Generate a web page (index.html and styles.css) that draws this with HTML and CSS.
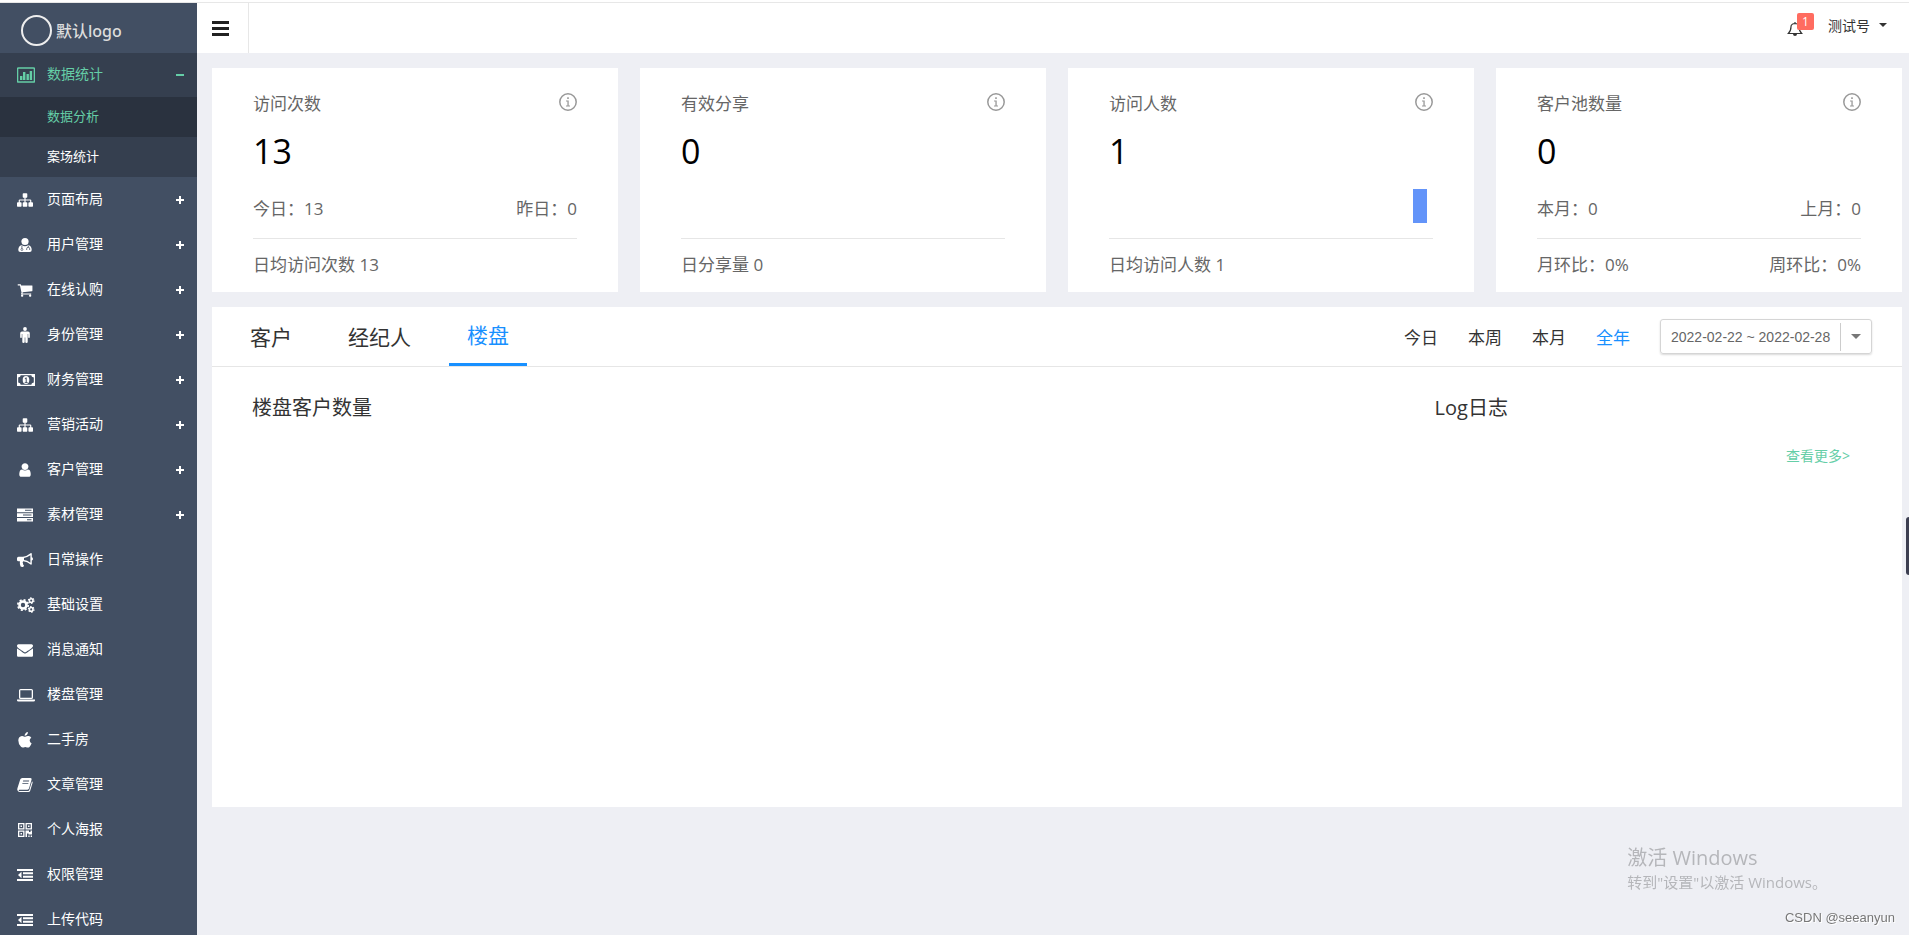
FILE: index.html
```html
<!DOCTYPE html>
<html lang="zh-CN">
<head>
  <meta charset="UTF-8">
  <meta name="viewport" content="width=device-width, initial-scale=1.0">
  <title>数据分析</title>
  <link rel="stylesheet" href="styles.css">
</head>
<body>

  <!-- 图标 -->
  <svg class="sprite" aria-hidden="true">
    <symbol id="i-chart" viewBox="0 0 18 16"><path d="M1.5 1h15q1 0 1 1v12q0 1-1 1h-15q-1 0-1-1V2q0-1 1-1z" fill="none" stroke="currentColor" stroke-width="1.600"/><path d="M3 9h2.400v4H3zM6 5h2.400v8H6zM9.500 7h2.400v6H9.500zM12.700 4h2.400v9h-2.400z"/></symbol>
    <symbol id="i-sitemap" viewBox="0 0 1792 1792"><path d="M1792 1248v320q0 40-28 68t-68 28h-320q-40 0-68-28t-28-68v-320q0-40 28-68t68-28h96v-192h-512v192h96q40 0 68 28t28 68v320q0 40-28 68t-68 28h-320q-40 0-68-28t-28-68v-320q0-40 28-68t68-28h96v-192h-512v192h96q40 0 68 28t28 68v320q0 40-28 68t-68 28h-320q-40 0-68-28t-28-68v-320q0-40 28-68t68-28h96v-192q0-52 38-90t90-38h512v-192h-96q-40 0-68-28t-28-68v-320q0-40 28-68t68-28h320q40 0 68 28t28 68v320q0 40-28 68t-68 28h-96v192h512q52 0 90 38t38 90v192h96q40 0 68 28t28 68z"/></symbol>
    <symbol id="i-user" viewBox="0 0 1792 1792"><path d="M1536 1399q0 109-62.5 187t-150.5 78h-854q-88 0-150.5-78t-62.5-187q0-85 8.500-160.5t31.500-152 58.500-131 94-89 134.500-34.500q131 128 313 128t313-128q76 0 134.500 34.500t94 89 58.500 131 31.500 152 8.500 160.500zm-256-887q0 159-112.500 271.500t-271.500 112.500-271.500-112.500-112.500-271.500 112.500-271.500 271.500-112.500 271.500 112.500 112.500 271.500z"/></symbol>
    <symbol id="i-doctor" viewBox="0 0 16 16"><circle cx="8" cy="4.500" r="3.600"/><path d="M4.600 8Q8 10.500 11.400 8 14.700 9 14.700 13q0 2-2 2H3.300q-2 0-2-2 0-4 3.300-5z"/><path d="M4.900 8.500v3.200M11.300 8.500v1.700M9.700 13v-1.200q0-1.500 1.500-1.500t1.500 1.500V13" fill="none" stroke="#424f63" stroke-width=".8"/><circle cx="4.900" cy="12.500" r="1" fill="none" stroke="#424f63" stroke-width=".7"/></symbol>
    <symbol id="i-cart" viewBox="0 0 1792 1792"><path d="M704 1536q0 52-38 90t-90 38-90-38-38-90 38-90 90-38 90 38 38 90zm896 0q0 52-38 90t-90 38-90-38-38-90 38-90 90-38 90 38 38 90zm128-1088v512q0 24-16.500 42.500t-40.500 21.500l-1044 122q13 60 13 70 0 16-24 64h920q26 0 45 19t19 45-19 45-45 19h-1024q-26 0-45-19t-19-45q0-11 8-31.500t16-36 21.500-40 15.500-29.500l-177-823h-204q-26 0-45-19t-19-45 19-45 45-19h256q16 0 28.500 6.500t19.500 15.500 13 24.500 8 26 5.500 29.500 4.500 26h1201q26 0 45 19t19 45z"/></symbol>
    <symbol id="i-male" viewBox="0 0 16 16"><circle cx="8" cy="2" r="1.900"/><path d="M5 4.500h6q1.800 0 1.800 1.800v3.900q0 .8-.8.800t-.8-.8V7h-.5v8q0 1-1.200 1t-1.200-1v-4.500h-.6V15q0 1-1.200 1t-1.200-1V7h-.5v3.200q0 .8-.8.800t-.8-.8V6.300Q3.200 4.500 5 4.500z"/></symbol>
    <symbol id="i-money" viewBox="0 0 18 16"><path fill-rule="evenodd" d="M0 2h18v12H0zM3.700 3.200q0 2-2.500 2.200v5.200q2.500.2 2.500 2.200h10.600q0-2 2.500-2.200V5.400q-2.500-.2-2.500-2.200z"/><ellipse cx="9" cy="8" rx="3.300" ry="4.100"/><path d="M7.700 6.600l1.100-1h.9v4.600h1v.9H7.700v-.9h1V6.800l-.6.400z" fill="#424f63"/></symbol>
    <symbol id="i-server" viewBox="0 0 16 16"><path fill-rule="evenodd" d="M0 1.500h16v3.700H0zM8 2.800v1h6.500v-1zM0 6.200h16v3.700H0zM6 7.500v1h8.500v-1zM0 10.900h16v3.600H0zM10 12.200v1h4.500v-1z"/></symbol>
    <symbol id="i-horn" viewBox="0 0 16 16"><path fill-rule="evenodd" d="M14 1q.8 0 .8.800v3.500q1.200.4 1.200 1.600t-1.200 1.600v3.400q0 .8-.8.800-4-3.200-7.700-3.400-1.200.8-.3 2-.4.900.8 1.900.5.900-.5 1.600-1.600.5-2.700-.3-1.100-2.300-.7-5.200H1.500Q0 9.300 0 8V6.200q0-1.500 1.500-1.500H6Q9.600 4.500 14 1zM13.400 3.200Q10.200 5.600 7 5.900v2.200q3.300.3 6.400 2.700z"/></symbol>
    <symbol id="i-cogs" viewBox="0 0 18 16"><g fill="none" stroke="currentColor"><circle cx="6" cy="8" r="3.500" stroke-width="2.600"/><circle cx="6" cy="8" r="5.200" stroke-width="1.700" stroke-dasharray="2.040 2.040"/><circle cx="14.200" cy="3.600" r="1.800" stroke-width="1.500"/><circle cx="14.200" cy="3.600" r="2.800" stroke-width="1.200" stroke-dasharray="1.470 1.460"/><circle cx="14.200" cy="12.400" r="1.800" stroke-width="1.500"/><circle cx="14.200" cy="12.400" r="2.800" stroke-width="1.200" stroke-dasharray="1.470 1.460"/></g></symbol>
    <symbol id="i-mail" viewBox="0 0 1792 1792"><path d="M1792 710v794q0 66-47 113t-113 47h-1472q-66 0-113-47t-47-113v-794q44 49 101 87 362 246 497 345 57 42 92.500 65.500t94.500 48 110 24.500h2q51 0 110-24.500t94.500-48 92.500-65.500q170-123 498-345 57-39 100-87zm0-294q0 79-49 151t-122 123q-376 261-468 325-10 7-42.500 31t-54 38.500-52 32.500-57.500 27-50 9h-2q-23 0-50-9t-57.500-27-52-32.500-54-38.500-42.500-31q-91-64-262-182.500t-205-142.500q-62-42-117-115.500t-55-136.500q0-78 41.500-130t118.500-52h1472q65 0 112.500 47t47.500 113z"/></symbol>
    <symbol id="i-laptop" viewBox="0 0 18 16"><path fill-rule="evenodd" d="M3.700 2h10.600Q16 2 16 3.600v6.800q0 1.600-1.700 1.600H3.700Q2 12 2 10.400V3.600Q2 2 3.700 2zM3.300 3.300v7.400h11.400V3.300zM0 12.600h18v.9q0 .9-1.500.9h-15Q0 14.400 0 13.500z"/></symbol>
    <symbol id="i-apple" viewBox="0 0 16 16"><path d="M14.600 11.200q-.7 2.200-2.100 3.700-1.100 1.100-2.500.5-1.700-.8-3.400 0-1.500.6-2.600-.6Q1.200 11.700 1.300 8.200 1.600 4.700 4.900 4.100q.9-.1 2 .4 1 .4 1.900 0 1.500-.7 2.900-.4 1.700.3 2.600 1.600-1.800 1.200-1.600 3 .1 1.800 1.900 2.500zM10.900 0q.1 1.600-.9 2.700-1 1.200-2.400 1.100Q7.500 2.300 8.600 1.200 9.600.1 10.900 0z"/></symbol>
    <symbol id="i-book" viewBox="0 0 16 16"><path fill-rule="evenodd" d="M5.300 1h8.200q1.500.1 1.100 1.400L12 11.600q-.4 1.100-1.500 1.100H2.400q-.9 0-.7.700.2.500.9.500h8.700q.7 0 1-.8l2.700-8.900q.9.600.6 1.500l-2.500 8.200Q12.700 15 11.400 15H2.700Q1 15 .4 13.300q-.4-1 .1-2.200L3.200 2.500Q3.700 1 5.300 1zM6.200 3.600l-.3.900h6l.3-.9zM5.500 5.900l-.3.900h6l.3-.9z"/></symbol>
    <symbol id="i-qr" viewBox="0 0 16 16"><path fill-rule="evenodd" d="M1 1h6.500v6.500H1zM2.300 2.300v3.900h3.900V2.300zM3.500 3.500H5V5H3.500zM8.500 1H15v6.500H8.500zM9.800 2.300v3.900h3.900V2.300zM11 3.500h1.500V5H11zM1 8.500h6.500V15H1zM2.300 9.800v3.900h3.900V9.800zM3.500 11H5v1.500H3.500zM8.500 8.500H12V10h1.500V8.500H15v4h-3.500v-1h-1.500V15H8.500zM11.300 13.600h1.300V15h-1.300zM13.700 13.600H15V15h-1.300z"/></symbol>
    <symbol id="i-dedent" viewBox="0 0 16 16"><path d="M0 2h16v2H0zM6 5.300h10v2H6zM6 8.700h10v2H6zM0 12h16v2H0zM4.500 4.800v6.400L1 8z"/></symbol>
    <symbol id="i-info" viewBox="0 0 18 18"><circle cx="9" cy="9" r="8.200" fill="none" stroke="currentColor" stroke-width="1.500"/><path d="M8.200 4.300h1.600v1.600H8.200zM7 7.400h2.700v5.200H11v1H7v-1h1.400V8.400H7z"/></symbol>
    <symbol id="i-bell" viewBox="0 0 16 16"><path d="M1.300 12.500Q4 10 4 5.800q0-3 4-3.300 4 .3 4 3.300 0 4.200 2.700 6.700zM8 2.500V1" fill="none" stroke="currentColor" stroke-width="1.200"/><path d="M6 13h4q0 2-2 2t-2-2z"/></symbol>
  </svg>

  <div class="layout">
    <aside class="sidebar">
      <a href="#" class="logo"><span class="logo-ring"></span>默认logo</a>
      <nav>
        <ul class="menu">
          <li>
            <a href="#" class="menu-item active"><svg class="icon wide"><use href="#i-chart"/></svg><span>数据统计</span><i class="minus"></i></a>
            <ul class="submenu">
              <li><a href="#" class="current">数据分析</a></li>
              <li><a href="#">案场统计</a></li>
            </ul>
          </li>
          <li><a href="#" class="menu-item"><svg class="icon"><use href="#i-sitemap"/></svg><span>页面布局</span><i class="plus"></i></a></li>
          <li><a href="#" class="menu-item"><svg class="icon"><use href="#i-doctor"/></svg><span>用户管理</span><i class="plus"></i></a></li>
          <li><a href="#" class="menu-item"><svg class="icon"><use href="#i-cart"/></svg><span>在线认购</span><i class="plus"></i></a></li>
          <li><a href="#" class="menu-item"><svg class="icon"><use href="#i-male"/></svg><span>身份管理</span><i class="plus"></i></a></li>
          <li><a href="#" class="menu-item"><svg class="icon wide"><use href="#i-money"/></svg><span>财务管理</span><i class="plus"></i></a></li>
          <li><a href="#" class="menu-item"><svg class="icon"><use href="#i-sitemap"/></svg><span>营销活动</span><i class="plus"></i></a></li>
          <li><a href="#" class="menu-item"><svg class="icon"><use href="#i-user"/></svg><span>客户管理</span><i class="plus"></i></a></li>
          <li><a href="#" class="menu-item"><svg class="icon"><use href="#i-server"/></svg><span>素材管理</span><i class="plus"></i></a></li>
          <li><a href="#" class="menu-item"><svg class="icon"><use href="#i-horn"/></svg><span>日常操作</span></a></li>
          <li><a href="#" class="menu-item"><svg class="icon wide"><use href="#i-cogs"/></svg><span>基础设置</span></a></li>
          <li><a href="#" class="menu-item"><svg class="icon"><use href="#i-mail"/></svg><span>消息通知</span></a></li>
          <li><a href="#" class="menu-item"><svg class="icon wide"><use href="#i-laptop"/></svg><span>楼盘管理</span></a></li>
          <li><a href="#" class="menu-item"><svg class="icon"><use href="#i-apple"/></svg><span>二手房</span></a></li>
          <li><a href="#" class="menu-item"><svg class="icon"><use href="#i-book"/></svg><span>文章管理</span></a></li>
          <li><a href="#" class="menu-item"><svg class="icon"><use href="#i-qr"/></svg><span>个人海报</span></a></li>
          <li><a href="#" class="menu-item"><svg class="icon"><use href="#i-dedent"/></svg><span>权限管理</span></a></li>
          <li><a href="#" class="menu-item"><svg class="icon"><use href="#i-dedent"/></svg><span>上传代码</span></a></li>
        </ul>
      </nav>
    </aside>

    <div class="main">
      <header class="header">
        <button type="button" class="toggle" aria-label="菜单"><span></span><span></span><span></span></button>
        <div class="header-right">
          <button type="button" class="notice" aria-label="通知"><svg class="icon"><use href="#i-bell"/></svg><span class="badge">1</span></button>
          <button type="button" class="account">测试号<i class="caret"></i></button>
        </div>
      </header>

      <main class="content">
        <div class="cards">
          <section class="card">
            <div class="card-head"><h3>访问次数</h3><svg class="info"><use href="#i-info"/></svg></div>
            <div class="card-num">13</div>
            <div class="card-mid"><span>今日：13</span><span>昨日：0</span></div>
            <div class="card-foot"><span>日均访问次数 13</span></div>
          </section>
          <section class="card">
            <div class="card-head"><h3>有效分享</h3><svg class="info"><use href="#i-info"/></svg></div>
            <div class="card-num">0</div>
            <div class="card-mid"></div>
            <div class="card-foot"><span>日分享量 0</span></div>
          </section>
          <section class="card">
            <div class="card-head"><h3>访问人数</h3><svg class="info"><use href="#i-info"/></svg></div>
            <div class="card-num">1</div>
            <div class="card-mid chart"><span class="bar"></span></div>
            <div class="card-foot"><span>日均访问人数 1</span></div>
          </section>
          <section class="card">
            <div class="card-head"><h3>客户池数量</h3><svg class="info"><use href="#i-info"/></svg></div>
            <div class="card-num">0</div>
            <div class="card-mid"><span>本月：0</span><span>上月：0</span></div>
            <div class="card-foot"><span>月环比：0%</span><span>周环比：0%</span></div>
          </section>
        </div>

        <section class="panel">
          <div class="panel-head">
            <div class="tabs">
              <button type="button">客户</button>
              <button type="button">经纪人</button>
              <button type="button" class="on">楼盘</button>
            </div>
            <div class="filter">
              <button type="button">今日</button>
              <button type="button">本周</button>
              <button type="button">本月</button>
              <button type="button" class="on">全年</button>
              <div class="date-box">
                <input type="text" class="date" aria-label="日期范围" value="2022-02-22 ~ 2022-02-28">
                <button type="button" class="date-btn" aria-label="选择日期"><i class="caret"></i></button>
              </div>
            </div>
          </div>
          <div class="panel-body">
            <div class="chart-col"><h2>楼盘客户数量</h2></div>
            <div class="log-col">
              <h2>Log日志</h2>
              <a href="#" class="more">查看更多&gt;</a>
            </div>
          </div>
        </section>
      </main>
    </div>
  </div>

  <div class="side-handle"></div>

  <div class="activate">
    <p class="activate-title">激活 Windows</p>
    <p>转到"设置"以激活 Windows。</p>
  </div>
  <div class="credit">CSDN @seeanyun</div>

</body>
</html>
```
FILE: styles.css
```css
* {
  box-sizing: border-box;
}

body {
  margin: 0;
  padding-top: 2px;
  height: 100vh;
  background: linear-gradient(#fff, #fff) top / 100% 2px no-repeat #eeeff4;
  color: #333;
  font-family: "Open Sans", "Noto Sans CJK SC", sans-serif;
  font-size: 14px;
  overflow: hidden;
}

h2, h3, p, ul {
  margin: 0;
  padding: 0;
  font-weight: normal;
}

ul {
  list-style: none;
}

a {
  text-decoration: none;
}

button {
  padding: 0;
  border: 0;
  background: none;
  color: inherit;
  font-family: inherit;
  cursor: pointer;
}

.sprite {
  display: none;
}

.icon {
  width: 16px;
  height: 16px;
  fill: currentColor;
}

.icon.wide {
  width: 18px;
}

.caret {
  border: 4px solid transparent;
  border-top-color: currentColor;
  border-bottom: 0;
}

.layout {
  display: flex;
  height: 100%;
  border-top: 1px solid #e7e7e7;
}

/* ===== 左侧菜单 ===== */
.sidebar {
  flex: none;
  width: 197px;
  background: #424f63;
  color: #fff;
  overflow: hidden;
}

.logo {
  display: flex;
  align-items: center;
  gap: 4px;
  height: 50px;
  padding: 4px 0 0 21px;
  color: #ddd;
  font-family: "Noto Sans", "Noto Sans CJK SC", sans-serif;
  font-size: 16px;
  font-weight: 500;
}

.logo-ring {
  width: 31px;
  height: 31px;
  border: 2px solid #eee;
  border-radius: 50%;
}

.menu > li {
  margin-bottom: 1px;
}

.menu-item {
  display: grid;
  grid-template-columns: 18px 1fr 8px;
  align-items: center;
  gap: 12px;
  height: 44px;
  padding: 0 13px 0 17px;
  color: #fff;
  line-height: 18px;
}

.menu-item span {
  padding-bottom: 2px;
}

.menu-item.active {
  background: #353f4f;
  color: #65cea7;
}

.plus,
.minus {
  height: 8px;
  background: linear-gradient(currentColor, currentColor) center / 8px 2px no-repeat;
}

.plus {
  background:
    linear-gradient(currentColor, currentColor) center / 8px 2px no-repeat,
    linear-gradient(currentColor, currentColor) center / 2px 8px no-repeat;
}

.submenu a {
  display: block;
  height: 40px;
  padding-left: 47px;
  background: #353f4f;
  color: #fff;
  font-size: 13px;
  line-height: 39px;
}

.submenu .current {
  background: #2a323f;
  color: #65cea7;
}

/* ===== 顶部 ===== */
.main {
  flex: 1;
  min-width: 0;
}

.header {
  display: flex;
  justify-content: space-between;
  height: 50px;
  background: #fff;
}

.toggle {
  display: flex;
  flex-direction: column;
  justify-content: center;
  gap: 3px;
  width: 52px;
  padding-left: 15px;
  border-right: 1px solid #e7e7e7;
}

.toggle span {
  width: 17px;
  height: 3px;
  background: #222;
}

.header-right {
  display: flex;
  align-items: flex-start;
  gap: 14px;
  padding: 10px 22px 0 0;
}

.notice {
  position: relative;
  width: 27px;
  height: 28px;
  text-align: left;
}

.notice .icon {
  margin-top: 8px;
}

.badge {
  position: absolute;
  top: 0;
  right: 0;
  width: 17px;
  height: 17px;
  border-radius: 2px;
  background: #ff6c60;
  color: #fff;
  font-size: 12px;
  line-height: 17px;
  text-align: center;
}

.account {
  display: flex;
  align-items: center;
  gap: 9px;
  height: 24px;
  font-size: 14px;
}

/* ===== 统计卡片 ===== */
.content {
  padding: 15px 7px 0 15px;
}

.cards {
  display: grid;
  grid-template-columns: repeat(4, 1fr);
  gap: 22px;
}

.card {
  height: 224px;
  padding: 21px 41px 0;
  background: #fff;
  color: #666;
  font-size: 17px;
}

.card-head {
  display: flex;
  justify-content: space-between;
  align-items: center;
  height: 26px;
}

.card-head h3 {
  font-size: 17px;
}

.info {
  width: 18px;
  height: 18px;
  fill: currentColor;
  color: #999;
}

.card-num {
  height: 72px;
  color: #000;
  font-size: 34px;
  line-height: 72px;
}

.card-mid {
  display: flex;
  justify-content: space-between;
  height: 52px;
  border-bottom: 1px solid #e6e6e6;
  line-height: 44px;
}

.chart {
  justify-content: flex-end;
  padding: 2px 6px 0 0;
}

.bar {
  width: 14px;
  height: 34px;
  background: #6394f9;
}

.card-foot {
  display: flex;
  justify-content: space-between;
  line-height: 52px;
}

/* ===== 数据面板 ===== */
.panel {
  min-height: 500px;
  margin-top: 15px;
  background: #fff;
}

.panel-head {
  display: flex;
  justify-content: space-between;
  height: 60px;
  padding: 0 30px 0 20px;
  border-bottom: 1px solid #e6e6e6;
}

.tabs {
  display: flex;
  gap: 20px;
}

.tabs button {
  height: 59px;
  padding: 0 18px 2px;
  font-size: 21px;
}

.tabs .on {
  border-bottom: 3px solid #1890ff;
  color: #1890ff;
}

.filter {
  display: flex;
  align-items: center;
  gap: 30px;
}

.filter > button {
  font-size: 17px;
}

.filter > .on {
  color: #1890ff;
}

.date-box {
  display: flex;
  align-items: center;
  width: 212px;
  height: 35px;
  border: 1px solid #d5d5d5;
  border-radius: 3px;
  box-shadow: 0 1px 2px rgba(0, 0, 0, 0.15);
}

.date {
  flex: 1;
  min-width: 0;
  padding: 0 0 0 10px;
  border: 0;
  outline: 0;
  background: none;
  color: #666;
  font-family: "Liberation Sans", sans-serif;
  font-size: 14px;
}

.date-btn {
  display: flex;
  justify-content: center;
  align-items: center;
  width: 31px;
  height: 28px;
  border-left: 1px solid #ccc;
  color: #777;
}

.date-btn .caret {
  border-width: 5px 5px 0;
}

.panel-body {
  display: grid;
  grid-template-columns: 7fr 3fr;
  padding: 24px 52px 0 40px;
}

.panel-body h2 {
  font-size: 20px;
  line-height: 34px;
}

.log-col {
  display: flex;
  flex-direction: column;
  gap: 21px;
  padding-left: 64px;
}

.more {
  align-self: flex-end;
  color: #65cea7;
  font-size: 14px;
  line-height: 20px;
}

/* ===== 浮层 ===== */
.side-handle {
  position: fixed;
  top: 517px;
  right: 0;
  width: 3px;
  height: 58px;
  border-radius: 3px 0 0 3px;
  background: #3c3e50;
}

.activate {
  position: fixed;
  right: 82px;
  bottom: 43px;
  color: #b5b6ba;
  font-size: 15px;
  line-height: 20px;
}

.activate-title {
  font-size: 20px;
  line-height: 28px;
}

.credit {
  position: fixed;
  right: 14px;
  bottom: 8px;
  color: #777;
  font-family: "Liberation Sans", sans-serif;
  font-size: 13px;
  line-height: 18px;
  text-shadow: 1px 1px 0 #fff;
}
```
